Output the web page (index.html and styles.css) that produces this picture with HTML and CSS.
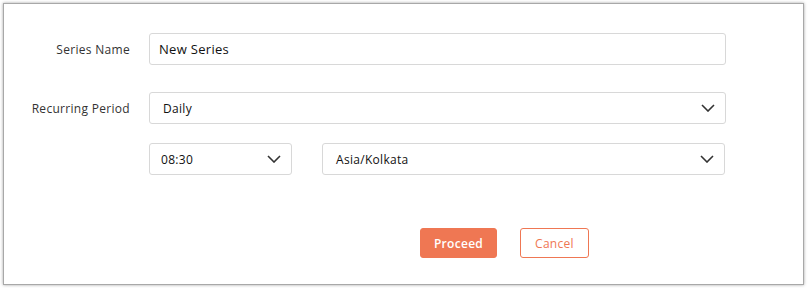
FILE: index.html
```html
<!DOCTYPE html>
<html lang="en">
<head>
    <meta charset="UTF-8">
    <title>New Series</title>
    <link rel="stylesheet" href="styles.css">
</head>
<body>
    <div class="dialog">
        <div class="form-row">
            <label class="form-label">Series Name</label>
            <div class="field wide">New Series</div>
        </div>
        <div class="form-row period-row">
            <label class="form-label">Recurring Period</label>
            <div class="field wide select small-text">
                <span>Daily</span>
                <svg class="chevron" width="14" height="8" viewBox="0 0 14 8"><path d="M1 1l6 6 6-6" fill="none" stroke="#333" stroke-width="1.6"/></svg>
            </div>
        </div>
        <div class="form-row sub-row">
            <span class="form-label"></span>
            <div class="field time select small-text">
                <span>08:30</span>
                <svg class="chevron" width="14" height="8" viewBox="0 0 14 8"><path d="M1 1l6 6 6-6" fill="none" stroke="#333" stroke-width="1.6"/></svg>
            </div>
            <div class="field zone select small-text">
                <span>Asia/Kolkata</span>
                <svg class="chevron" width="14" height="8" viewBox="0 0 14 8"><path d="M1 1l6 6 6-6" fill="none" stroke="#333" stroke-width="1.6"/></svg>
            </div>
        </div>
        <div class="actions">
            <button type="button" class="btn primary">Proceed</button>
            <button type="button" class="btn outline">Cancel</button>
        </div>
    </div>
</body>
</html>
```

FILE: styles.css
```css
body {
    margin: 0;
    padding: 3px;
    background: #fff;
    font-family: 'Open Sans', 'Lato', sans-serif;
    color: #333;
}
.dialog {
    width: 801px;
    height: 282px;
    box-sizing: border-box;
    border: 1px solid #a8a8a8;
    box-shadow: 0 0 3px rgba(0, 0, 0, 0.35);
    padding-top: 29px;
}
.form-row {
    display: flex;
    align-items: center;
    margin-bottom: 27px;
}
.period-row {
    margin-bottom: 19px;
}
.sub-row {
    margin-bottom: 0;
}
.form-label {
    width: 126px;
    flex: none;
    text-align: right;
    font-size: 12px;
    letter-spacing: 0.3px;
    color: #333;
    margin-right: 19px;
}
.field {
    height: 32px;
    box-sizing: border-box;
    border: 1px solid #d8d8d8;
    border-radius: 3px;
    padding: 0 9px;
    display: flex;
    align-items: center;
    font-size: 13px;
    letter-spacing: 0.3px;
    color: #111;
}
.small-text {
    font-size: 12px;
    padding-left: 13px;
}
.select {
    justify-content: space-between;
    padding-right: 10px;
}
.wide {
    width: 577px;
}
.time {
    width: 143px;
    padding-left: 11px;
    margin-right: 30px;
}
.zone {
    width: 403px;
}
.actions {
    display: flex;
    gap: 23px;
    margin-top: 53px;
    padding-left: 416px;
}
.btn {
    height: 30px;
    font-family: inherit;
    font-size: 12px;
    letter-spacing: 0.3px;
    border-radius: 3px;
    cursor: pointer;
}
.primary {
    width: 77px;
    background: #ef7753;
    border: 1px solid #ef7753;
    color: #fff;
    font-weight: 600;
}
.outline {
    width: 69px;
    background: #fff;
    border: 1px solid #ef7753;
    color: #ef7753;
}
```
